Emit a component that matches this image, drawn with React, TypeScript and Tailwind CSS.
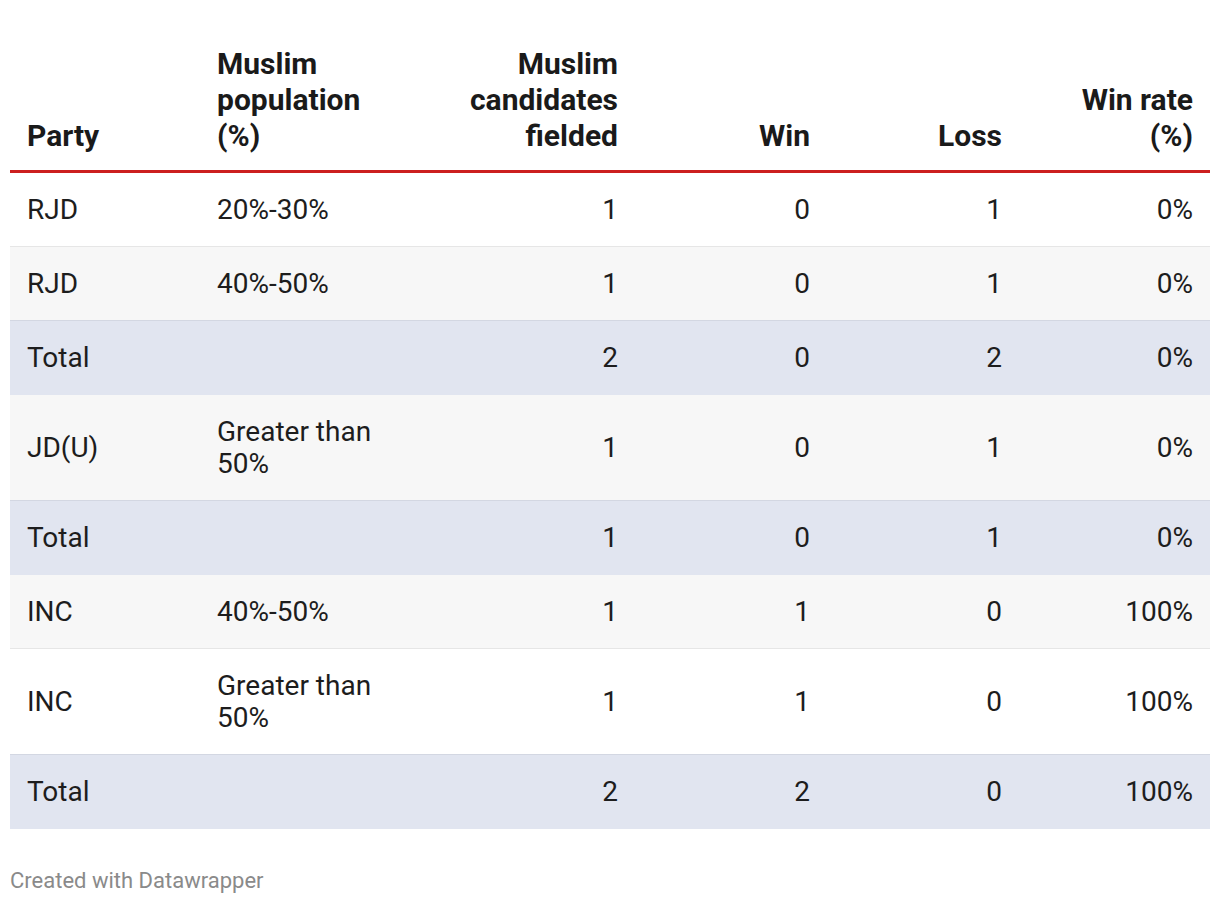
import React from "react";

type Row = { party: string; pop: string; fielded: string; win: string; loss: string; rate: string; total?: boolean; bg: string; border: string };

const rows: Row[] = [
  { party: "RJD", pop: "20%-30%", fielded: "1", win: "0", loss: "1", rate: "0%", bg: "bg-white", border: "border-b border-[#e6e6e6] pb-[20px]" },
  { party: "RJD", pop: "40%-50%", fielded: "1", win: "0", loss: "1", rate: "0%", bg: "bg-[#f7f7f7]", border: "border-b border-[#d3d7e2] pb-[20px]" },
  { party: "Total", pop: "", fielded: "2", win: "0", loss: "2", rate: "0%", total: true, bg: "bg-[#e1e5f0]", border: "pb-[21px]" },
  { party: "JD(U)", pop: "Greater than 50%", fielded: "1", win: "0", loss: "1", rate: "0%", bg: "bg-[#f7f7f7]", border: "border-b border-[#d3d7e2] pb-[20px]" },
  { party: "Total", pop: "", fielded: "1", win: "0", loss: "1", rate: "0%", total: true, bg: "bg-[#e1e5f0]", border: "pb-[21px]" },
  { party: "INC", pop: "40%-50%", fielded: "1", win: "1", loss: "0", rate: "100%", bg: "bg-[#f7f7f7]", border: "border-b border-[#e6e6e6] pb-[20px]" },
  { party: "INC", pop: "Greater than 50%", fielded: "1", win: "1", loss: "0", rate: "100%", bg: "bg-white", border: "border-b border-[#d3d7e2] pb-[20px]" },
  { party: "Total", pop: "", fielded: "2", win: "2", loss: "0", rate: "100%", total: true, bg: "bg-[#e1e5f0]", border: "pb-[21px]" },
];

const grid = "grid grid-cols-[190px_200px_235px_192px_192px_191px]";

export default function App() {
  return (
    <div className="w-[1220px] h-[904px] bg-white px-[10px] text-[#1d1d1d]" style={{ fontFamily: "Roboto, 'Liberation Sans', sans-serif" }}>
      <div className={`${grid} items-end border-b-[3px] border-[#cc1f1f] pt-[46px] pb-[16px] text-[30px] leading-[36px] font-bold text-[#1a1a1a]`}>
        <div className="px-[17px]">Party</div>
        <div className="px-[17px]">Muslim<br />population<br />(%)</div>
        <div className="px-[17px] text-right">Muslim<br />candidates<br />fielded</div>
        <div className="px-[17px] text-right">Win</div>
        <div className="px-[17px] text-right">Loss</div>
        <div className="px-[17px] text-right">Win rate<br />(%)</div>
      </div>
      {rows.map((r, i) => (
        <div key={i} className={`${grid} items-center ${r.bg} ${r.border} pt-[21px] text-[28px] leading-[32px]`}>
          <div className="px-[17px]">{r.party}</div>
          <div className="px-[17px]">{r.pop}</div>
          <div className="px-[17px] text-right">{r.fielded}</div>
          <div className="px-[17px] text-right">{r.win}</div>
          <div className="px-[17px] text-right">{r.loss}</div>
          <div className="px-[17px] text-right">{r.rate}</div>
        </div>
      ))}
      <div className="pt-[39px] text-[22px] leading-[26px] text-[#8a8a8a]">Created with Datawrapper</div>
    </div>
  );
}
